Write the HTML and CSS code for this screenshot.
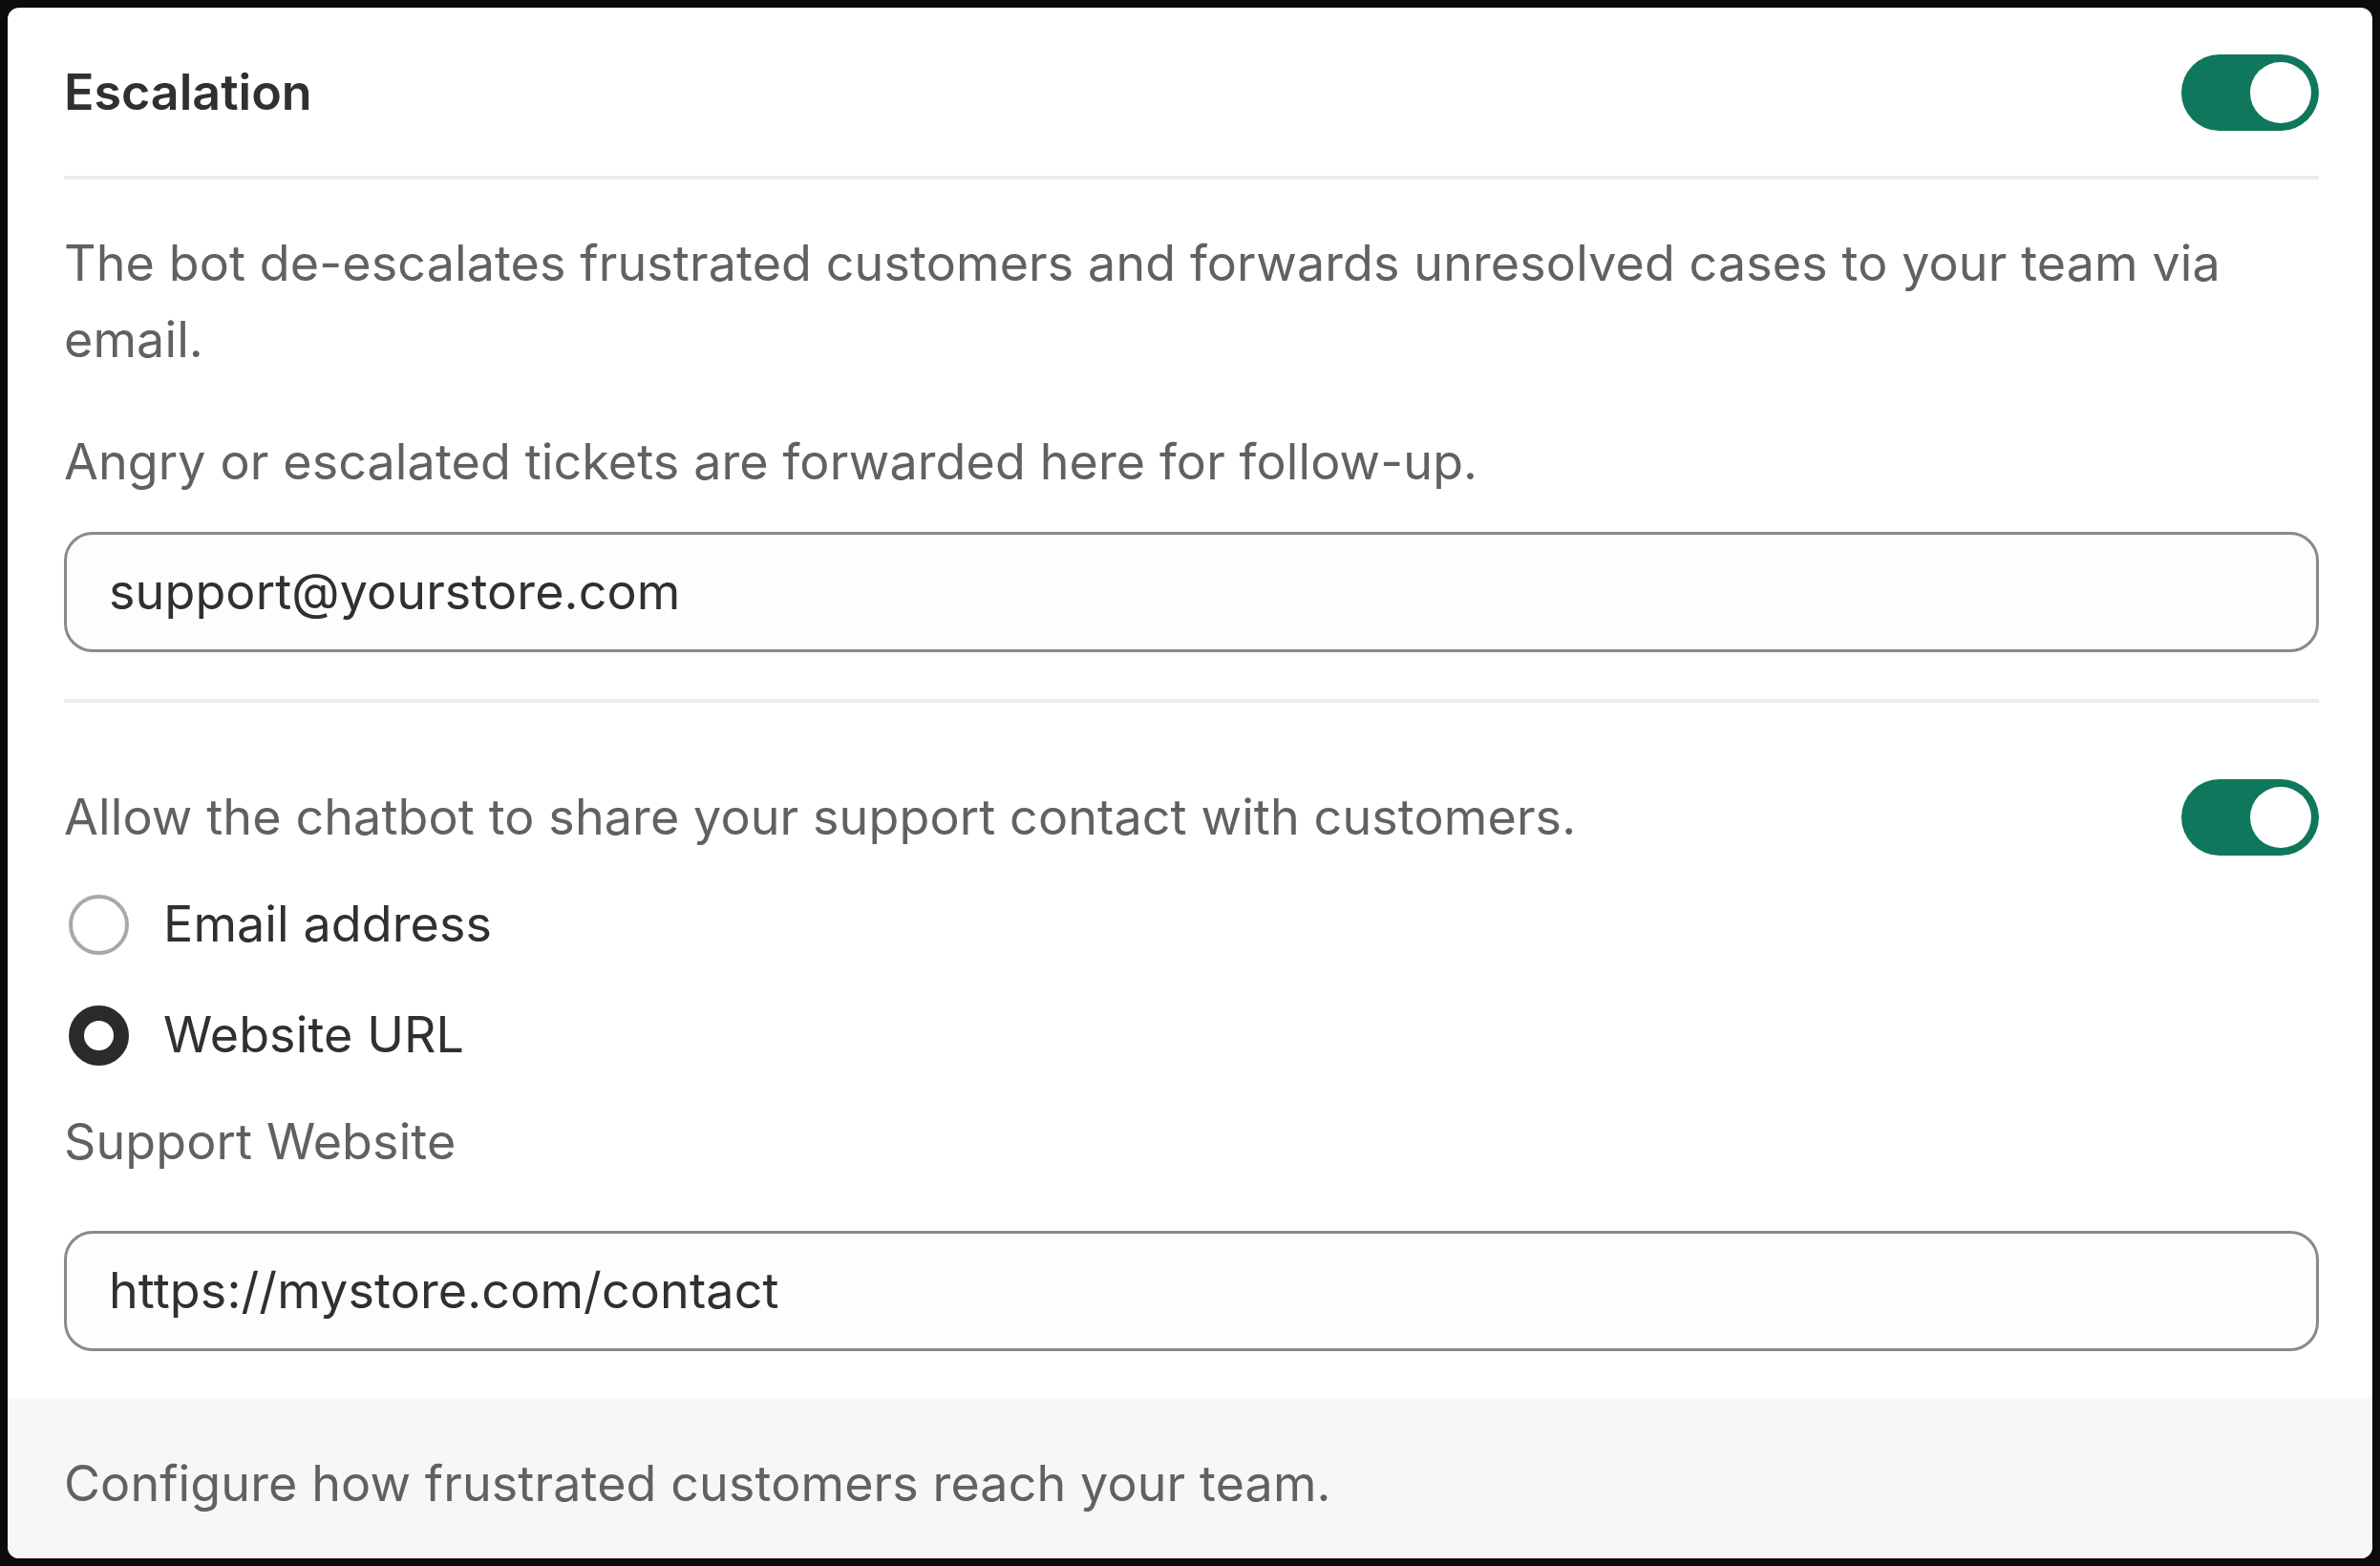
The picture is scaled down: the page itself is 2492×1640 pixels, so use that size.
FILE: index.html
```html
<!DOCTYPE html>
<html lang="en">
<head>
<meta charset="utf-8">
<title>Escalation</title>
<link rel="stylesheet" href="styles.css">
</head>
<body>
<div class="card">
  <div class="card-body">
    <div class="row row-head">
      <h2 class="title">Escalation</h2>
      <span class="toggle"><span class="knob"></span></span>
    </div>
    <div class="divider divider-1"></div>
    <p class="text desc">The bot de-escalates frustrated customers and forwards unresolved cases to your team via email.</p>
    <p class="text help">Angry or escalated tickets are forwarded here for follow-up.</p>
    <div class="input input-1">support@yourstore.com</div>
    <div class="divider divider-2"></div>
    <div class="row row-share">
      <span class="text">Allow the chatbot to share your support contact with customers.</span>
      <span class="toggle"><span class="knob"></span></span>
    </div>
    <div class="radio-row radio-row-1">
      <span class="radio"></span>
      <span class="radio-label">Email address</span>
    </div>
    <div class="radio-row radio-row-2">
      <span class="radio checked"></span>
      <span class="radio-label">Website URL</span>
    </div>
    <p class="text label">Support Website</p>
    <div class="input input-2">https://mystore.com/contact</div>
  </div>
  <div class="card-footer">
    <p class="text">Configure how frustrated customers reach your team.</p>
  </div>
</div>
</body>
</html>
```

FILE: styles.css
```css
* {
  box-sizing: border-box;
}

html, body {
  margin: 0;
  padding: 0;
  background: #0b0b0b;
}

body {
  padding: 8px;
  font-family: Inter, "Noto Sans", "Liberation Sans", sans-serif;
  font-size: 52px;
  line-height: 80px;
  letter-spacing: 0.12px;
  color: #303030;
}

.card {
  width: 2476px;
  height: 1624px;
  background: #ffffff;
  border-radius: 12px;
  overflow: hidden;
  display: flex;
  flex-direction: column;
}

.card-body {
  padding: 49px 56px 49px 59px;
  display: flex;
  flex-direction: column;
}

.row {
  display: flex;
  align-items: center;
  justify-content: space-between;
  height: 80px;
}

.title {
  margin: 0;
  font-size: 52px;
  line-height: 80px;
  font-weight: 600;
  letter-spacing: 0;
  color: #303030;
}

.toggle {
  width: 144px;
  height: 80px;
  border-radius: 40px;
  background: #0f775b;
  display: flex;
  align-items: center;
  justify-content: flex-end;
  padding: 0 8px;
  flex: none;
}

.knob {
  width: 64px;
  height: 64px;
  border-radius: 50%;
  background: #ffffff;
}

.divider {
  height: 4px;
  background: #ececec;
}

.divider-1 {
  margin-top: 47px;
}

.divider-2 {
  margin-top: 49px;
}

.text {
  margin: 0;
  color: #616161;
  font-size: 52px;
  line-height: 80px;
}

.desc {
  margin-top: 48px;
}

.help {
  margin-top: 48px;
}

.input {
  height: 126px;
  border: 3px solid #8a8a8a;
  border-radius: 30px;
  background: #fdfdfd;
  padding: 0 44px;
  display: flex;
  align-items: center;
  color: #303030;
}

.input-1 {
  margin-top: 33px;
}

.row-share {
  margin-top: 80px;
}

.radio-row {
  display: flex;
  align-items: center;
  height: 80px;
  padding-left: 5px;
}

.radio-row-1 {
  margin-top: 32px;
}

.radio-row-2 {
  margin-top: 36px;
}

.radio {
  width: 63px;
  height: 63px;
  border-radius: 50%;
  border: 4px solid #a8a8a8;
  background: #ffffff;
  flex: none;
}

.radio.checked {
  border: 16px solid #2b2b2b;
}

.radio-label {
  margin-left: 36px;
  color: #303030;
}

.label {
  margin-top: 32px;
}

.input-2 {
  margin-top: 53px;
}

.card-footer {
  flex: 1;
  background: #f7f7f7;
  padding: 50px 59px 0 59px;
}
```
